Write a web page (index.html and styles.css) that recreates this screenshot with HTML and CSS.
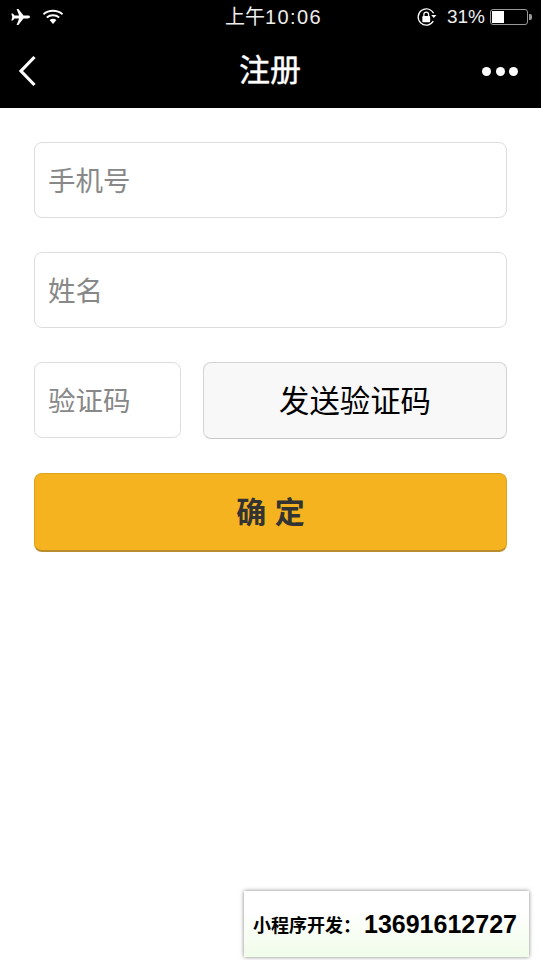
FILE: index.html
```html
<!DOCTYPE html>
<html lang="zh-CN">
<head>
  <meta charset="UTF-8" />
  <meta name="viewport" content="width=device-width, initial-scale=1.0" />
  <title>注册</title>
  <link rel="stylesheet" href="styles.css">
</head>
<body>
  <header class="topbar">
    <div class="status-bar">
      <div class="status-left">
        <svg class="icon-plane" viewBox="0 0 22 16" width="22" height="16">
          <path fill="#fff" d="M21 8c0-.9-1-1.400-2.200-1.400h-4.300L9.400 0H7.600l2.500 6.600H5.600L3.700 4.400H2.300l1 3.600-1 3.600h1.400l1.900-2.200h4.500L7.600 16h1.800l5.100-6.600h4.300C20 9.400 21 8.900 21 8z"/>
        </svg>
        <svg class="icon-wifi" viewBox="0 0 22 16" width="22" height="16">
          <path fill="none" stroke="#fff" stroke-width="1.800" d="M1.500 5.200C6.800.6 15.200.6 20.500 5.200M4.800 8.500c3.500-3 8.900-3 12.400 0"/>
          <path fill="#fff" d="M7.600 10.900c2-1.500 4.800-1.500 6.800 0L11 15z"/>
        </svg>
      </div>
      <div class="status-time">上午<span class="time-digits">10:06</span></div>
      <div class="status-right">
        <svg class="icon-lock" viewBox="0 0 22 22" width="23" height="23">
          <path fill="none" stroke="#fff" stroke-width="1.200" d="M17.500 14.500A7.800 7.800 0 1 1 17.800 7"/>
          <path fill="#fff" d="M15.500 8.500h5l-2.500 3z"/>
          <rect fill="#fff" x="7" y="9.500" width="7.500" height="6" rx="1"/>
          <path fill="none" stroke="#fff" stroke-width="1.200" d="M8.500 9.500V8a2.200 2.200 0 0 1 4.500 0v1.500"/>
        </svg>
        <span class="battery-pct">31%</span>
        <div class="battery">
          <div class="battery-level"></div>
        </div>
        <div class="battery-tip"></div>
      </div>
    </div>
    <div class="nav-bar">
      <svg class="icon-back" viewBox="0 0 20 32" width="20" height="32">
        <path fill="none" stroke="#fff" stroke-width="3.200" d="M16.500 2 3 16l13.500 14"/>
      </svg>
      <div class="nav-title">注册</div>
      <div class="nav-more">
        <span></span><span></span><span></span>
      </div>
    </div>
  </header>

  <form class="form">
    <div class="field">手机号</div>
    <div class="field">姓名</div>
    <div class="code-row">
      <div class="field code-field">验证码</div>
      <div class="send-btn">发送验证码</div>
    </div>
    <div class="submit-btn">确 定</div>
  </form>

  <div class="promo">
    <span class="promo-label">小程序开发：</span><span class="promo-phone">13691612727</span>
  </div>
</body>
</html>
```

FILE: styles.css
```css
* {
  box-sizing: border-box;
}
html, body {
  height: 100%;
}
body {
  margin: 0;
  background: #fff;
  font-family: "Liberation Sans", "Noto Sans CJK SC", sans-serif;
  overflow: hidden;
}

.topbar {
  background: #000;
  height: 108px;
  color: #fff;
}
.status-bar {
  height: 34px;
  display: flex;
  align-items: center;
  justify-content: space-between;
  position: relative;
  padding: 0 9px 0 9px;
}
.status-left {
  display: flex;
  align-items: center;
  gap: 11px;
}
.status-time {
  position: absolute;
  left: 225px;
  top: 5px;
  font-size: 20px;
  line-height: 24px;
  color: #eee;
}
.time-digits {
  letter-spacing: 1.4px;
}
.status-right {
  display: flex;
  align-items: center;
}
.battery-pct {
  font-size: 19px;
  margin-left: 9px;
  margin-right: 5px;
  color: #eee;
}
.battery {
  width: 38px;
  height: 16px;
  border: 1px solid #999;
  border-radius: 3px;
  padding: 1px;
}
.battery-level {
  width: 12px;
  height: 100%;
  background: #fff;
}
.battery-tip {
  width: 3px;
  height: 6px;
  margin-left: 1px;
  background: #999;
  border-radius: 0 2px 2px 0;
}

.nav-bar {
  height: 74px;
  display: flex;
  align-items: center;
  justify-content: space-between;
  position: relative;
  padding: 0 23px 0 18px;
}
.nav-title {
  position: absolute;
  left: 0;
  right: 1px;
  top: 0;
  text-align: center;
  font-size: 31px;
  font-weight: 400;
  line-height: 74px;
  -webkit-text-stroke: 0.4px #fff;
}
.nav-more {
  display: flex;
  gap: 4.500px;
}
.nav-more span {
  width: 9px;
  height: 9px;
  border-radius: 50%;
  background: #fff;
}

.form {
  padding: 34px 34px 0;
}
.field {
  height: 76px;
  border: 1px solid #ddd;
  border-radius: 8px;
  padding-left: 13px;
  margin-bottom: 34px;
  font-size: 27.500px;
  line-height: 77px;
  color: #888;
}
.code-row {
  display: flex;
  align-items: flex-start;
  gap: 22px;
  margin-bottom: 34px;
}
.code-field {
  width: 147px;
  margin-bottom: 0;
}
.send-btn {
  flex: 1;
  height: 77px;
  background: #f8f8f8;
  border: 1px solid #d4d4d4;
  border-bottom-color: #c8c8c8;
  border-radius: 8px;
  text-align: center;
  font-size: 30.400px;
  line-height: 76px;
  color: #000;
}
.submit-btn {
  height: 79px;
  background: #f5b31f;
  border: 1px solid #dfa21c;
  border-bottom: 2px solid #b98d2c;
  border-radius: 8px;
  text-align: center;
  font-size: 30px;
  font-weight: 700;
  line-height: 78px;
  color: #333;
}

.promo {
  position: absolute;
  left: 244px;
  top: 891px;
  width: 285px;
  height: 66px;
  padding-left: 9px;
  background: linear-gradient(to bottom, #fff 30%, #f1fce9);
  box-shadow: 0 0 4px rgba(0,0,0,0.5);
  display: flex;
  align-items: center;
  white-space: nowrap;
  color: #000;
  font-weight: 700;
}
.promo-label {
  font-size: 18px;
}
.promo-phone {
  font-size: 25px;
  margin-left: 3px;
}
```
